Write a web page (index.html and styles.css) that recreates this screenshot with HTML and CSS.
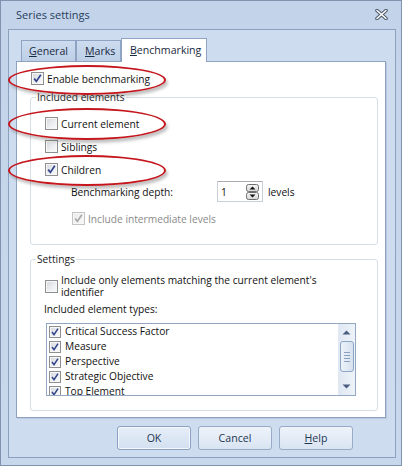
FILE: index.html
```html
<!DOCTYPE html>
<html>
<head>
<meta charset="utf-8">
<link rel="stylesheet" href="styles.css">
</head>
<body>
<div class="window">
  <div class="titlebar">
    <span class="title">Series settings</span>
    <svg class="close" width="13" height="11" viewBox="0 0 13 11">
      <path d="M2 1.5 L11 9.5 M11 1.5 L2 9.5" stroke="#4b5566" stroke-width="3.6" stroke-linecap="round"/>
      <path d="M2 1.5 L11 9.5 M11 1.5 L2 9.5" stroke="#ffffff" stroke-width="1.6" stroke-linecap="round"/>
    </svg>
  </div>
  <div class="frame">
    <div class="tabs">
      <div class="tab t-general"><u>G</u>eneral</div>
      <div class="tab t-marks"><u>M</u>arks</div>
      <div class="tab t-bench active"><u>B</u>enchmarking</div>
    </div>
    <div class="panel">
      <div class="check enable">
        <span class="cb"><svg width="11" height="11" viewBox="0 0 11 11"><path d="M2.2 5.6 L4.4 8.4 L8.8 1.8" fill="none" stroke="#31448a" stroke-width="1.7"/></svg></span>
        <span class="lbl">Enable benchmarking</span>
      </div>
      <div class="group g1">
        <div class="legend">Included elements</div>
        <div class="check row first">
          <span class="cb"></span><span class="lbl">Current element</span>
        </div>
        <div class="check row">
          <span class="cb"></span><span class="lbl">Siblings</span>
        </div>
        <div class="check row">
          <span class="cb"><svg width="11" height="11" viewBox="0 0 11 11"><path d="M2.2 5.6 L4.4 8.4 L8.8 1.8" fill="none" stroke="#31448a" stroke-width="1.7"/></svg></span>
          <span class="lbl">Children</span>
        </div>
        <div class="depth">
          <span class="depth-lbl">Benchmarking depth:</span>
          <div class="spin">
            <span class="spin-val">1</span>
            <svg class="spin-btn" width="13" height="16" viewBox="0 0 13 16">
              <defs>
                <linearGradient id="sg" x1="0" y1="0" x2="0" y2="1">
                  <stop offset="0" stop-color="#f6f6f6"/>
                  <stop offset="1" stop-color="#d6d6d6"/>
                </linearGradient>
              </defs>
              <rect x="0.5" y="0.5" width="12" height="7" rx="2" fill="url(#sg)" stroke="#6e6e6e"/>
              <rect x="0.5" y="8.5" width="12" height="7" rx="2" fill="url(#sg)" stroke="#6e6e6e"/>
              <path d="M3.5 5.5 L6.5 2.5 L9.5 5.5 Z" fill="#111"/>
              <path d="M3.5 10.5 L6.5 13.5 L9.5 10.5 Z" fill="#111"/>
            </svg>
          </div>
          <span class="levels">levels</span>
        </div>
        <div class="check disabled inter">
          <span class="cb"><svg width="11" height="11" viewBox="0 0 11 11"><path d="M2.2 5.6 L4.4 8.4 L8.8 1.8" fill="none" stroke="#a9a9a9" stroke-width="1.7"/></svg></span>
          <span class="lbl">Include intermediate levels</span>
        </div>
      </div>
      <div class="group g2">
        <div class="legend">Settings</div>
        <div class="check only">
          <span class="cb"></span>
          <span class="lbl two">Include only elements matching the current element's<br>identifier</span>
        </div>
        <div class="types">Included element types:</div>
        <div class="list">
          <div class="items">
            <div class="item"><span class="cb small"><svg width="10" height="10" viewBox="0 0 11 11"><path d="M2.2 5.6 L4.4 8.4 L8.8 1.8" fill="none" stroke="#31448a" stroke-width="1.7"/></svg></span><span>Critical Success Factor</span></div>
            <div class="item"><span class="cb small"><svg width="10" height="10" viewBox="0 0 11 11"><path d="M2.2 5.6 L4.4 8.4 L8.8 1.8" fill="none" stroke="#31448a" stroke-width="1.7"/></svg></span><span>Measure</span></div>
            <div class="item"><span class="cb small"><svg width="10" height="10" viewBox="0 0 11 11"><path d="M2.2 5.6 L4.4 8.4 L8.8 1.8" fill="none" stroke="#31448a" stroke-width="1.7"/></svg></span><span>Perspective</span></div>
            <div class="item"><span class="cb small"><svg width="10" height="10" viewBox="0 0 11 11"><path d="M2.2 5.6 L4.4 8.4 L8.8 1.8" fill="none" stroke="#31448a" stroke-width="1.7"/></svg></span><span>Strategic Objective</span></div>
            <div class="item"><span class="cb small"><svg width="10" height="10" viewBox="0 0 11 11"><path d="M2.2 5.6 L4.4 8.4 L8.8 1.8" fill="none" stroke="#31448a" stroke-width="1.7"/></svg></span><span>Top Element</span></div>
          </div>
          <div class="scrollbar">
            <div class="sb-btn"><svg width="9" height="5" viewBox="0 0 9 5"><path d="M0.5 4.5 L4.5 0.5 L8.5 4.5 Z" fill="#4a5d80"/></svg></div>
            <div class="sb-thumb">
              <span class="grip"></span><span class="grip"></span><span class="grip"></span><span class="grip"></span>
            </div>
            <div class="sb-track"></div>
            <div class="sb-btn"><svg width="9" height="5" viewBox="0 0 9 5"><path d="M0.5 0.5 L4.5 4.5 L8.5 0.5 Z" fill="#4a5d80"/></svg></div>
          </div>
        </div>
      </div>
    </div>
    <div class="buttons">
      <div class="btn default">OK</div>
      <div class="btn">Cancel</div>
      <div class="btn"><u>H</u>elp</div>
    </div>
  </div>
  <div class="ellipse e1"></div>
  <div class="ellipse e2"></div>
  <div class="ellipse e3"></div>
</div>
</body>
</html>
```

FILE: styles.css
```css
html, body {
  margin: 0;
  padding: 0;
}
body {
  font-family: "Open Sans", "Noto Sans", sans-serif;
  font-size: 10.2px;
  color: #111;
  background: #c4d5ea;
}
u {
  text-decoration: underline;
  text-underline-offset: 1px;
}
.window {
  position: relative;
  width: 402px;
  height: 466px;
  box-sizing: border-box;
  border: 1px solid #7f92ae;
  background: linear-gradient(#c3d4ea, #c8d8ec);
  display: flex;
  flex-direction: column;
  overflow: hidden;
}
.titlebar {
  height: 28px;
  display: flex;
  align-items: center;
  padding-left: 15px;
  flex-shrink: 0;
}
.title {
  font-size: 11px;
  color: #283d5c;
  margin-top: -2px;
}
.close {
  margin-left: auto;
  margin-right: 13px;
  margin-top: -2px;
}
.frame {
  margin: 0 5px 7px 7px;
  height: 429px;
  box-sizing: border-box;
  border: 1px solid #8ba1bf;
  background: #cedcef;
  padding-top: 8px;
  display: flex;
  flex-direction: column;
}
.tabs {
  margin-left: 12px;
  height: 23px;
  display: flex;
  align-items: flex-end;
}
.tab {
  height: 21px;
  box-sizing: border-box;
  border: 1px solid #8fa4c2;
  border-bottom: none;
  background: linear-gradient(#cddcef, #bdcfe7);
  padding-left: 7px;
  line-height: 20px;
  color: #1a2a40;
  font-size: 10.6px;
}
.t-general { width: 55px; }
.t-marks { width: 45px; padding-left: 8px; }
.t-bench { width: 86px; padding-left: 8px; }
.tab.active {
  height: 24px;
  margin-bottom: -1px;
  background: #fff;
  position: relative;
  z-index: 1;
  line-height: 23px;
  padding-bottom: 2px;
}
.panel {
  margin-left: 7px;
  width: 370px;
  height: 357px;
  box-sizing: border-box;
  border: 1px solid #8fa3c0;
  background: #fff;
  display: flex;
  flex-direction: column;
  box-shadow: 1px 1px 0 #b7c8df;
}
.check {
  display: flex;
  align-items: center;
  height: 13px;
}
.cb {
  width: 13px;
  height: 13px;
  box-sizing: border-box;
  flex-shrink: 0;
  border: 1px solid #8e8f8f;
  background: linear-gradient(135deg, #d3d6db 0%, #eef0f2 60%, #fafafa 100%);
  box-shadow: inset 0 0 0 1px #f7f7f7;
  display: flex;
  align-items: center;
  justify-content: center;
}
.cb.small {
  width: 12px;
  height: 12px;
}
.lbl {
  margin-left: 3px;
  line-height: 16px;
  white-space: nowrap;
}
.enable {
  margin: 10px 0 0 14px;
}
.group {
  margin-left: 13px;
  width: 348px;
  box-sizing: border-box;
  border: 1px solid #d5dee6;
  border-radius: 3px;
  display: flex;
  flex-direction: column;
}
.g1 {
  margin-top: 12px;
  height: 148px;
}
.g2 {
  margin-top: 14px;
  height: 152px;
}
.legend {
  align-self: flex-start;
  margin-top: -9px;
  margin-left: 5px;
  padding: 0 1px;
  line-height: 16px;
  background: #fff;
  color: #1b1b1b;
}
.row {
  margin-left: 14px;
  margin-top: 10px;
}
.row.first {
  margin-top: 12px;
}
.depth {
  margin: 5px 0 0 40px;
  height: 21px;
  display: flex;
  align-items: center;
}
.depth-lbl {
  width: 146px;
}
.spin {
  width: 46px;
  height: 21px;
  box-sizing: border-box;
  border: 1px solid #c9d0d8;
  border-top-color: #abadb3;
  display: flex;
  align-items: center;
}
.spin-val {
  margin-left: 3px;
}
.spin-btn {
  margin-left: auto;
  margin-right: 3px;
}
.levels {
  margin-left: 5px;
}
.inter {
  margin: 10px 0 0 41px;
}
.disabled .cb {
  border-color: #c2c4c6;
  background: linear-gradient(135deg, #ececec, #f8f8f8);
}
.disabled .lbl {
  color: #8a8a8a;
}
.only {
  margin: 6px 0 0 14px;
  height: 26px;
}
.lbl.two {
  line-height: 12.5px;
}
.types {
  margin: 2px 0 0 13px;
  line-height: 16px;
}
.list {
  margin: 6px 0 0 15px;
  width: 310px;
  height: 73px;
  box-sizing: border-box;
  border: 1px solid #94a7c1;
  display: flex;
  overflow: hidden;
}
.items {
  flex: 1;
  overflow: hidden;
}
.item {
  height: 15px;
  display: flex;
  align-items: center;
  padding-left: 2px;
}
.item span:last-child {
  margin-left: 4px;
  line-height: 15px;
  white-space: nowrap;
}
.scrollbar {
  width: 17px;
  background: linear-gradient(to right, #dfe7f2, #eef3f9);
  display: flex;
  flex-direction: column;
  align-items: center;
}
.sb-btn {
  height: 17px;
  width: 17px;
  display: flex;
  align-items: center;
  justify-content: center;
}
.sb-thumb {
  width: 14px;
  height: 31px;
  box-sizing: border-box;
  border: 1px solid #8ea6c6;
  border-radius: 3px;
  background: linear-gradient(to right, #edf2f9, #d5e1ef);
  display: flex;
  flex-direction: column;
  align-items: center;
  justify-content: center;
  gap: 2px;
}
.grip {
  width: 6px;
  height: 1px;
  background: #8aa0bf;
}
.sb-track {
  flex: 1;
}
.buttons {
  margin: 8px 0 0 108px;
  display: flex;
  gap: 7px;
}
.btn {
  width: 74px;
  height: 24px;
  box-sizing: border-box;
  border: 1px solid #98abc6;
  border-radius: 3px;
  background: linear-gradient(#eef3fa, #d9e4f2);
  display: flex;
  align-items: center;
  justify-content: center;
  color: #1d3552;
  font-size: 10.6px;
}
.btn.default {
  border-color: #8ba2c2;
  background: linear-gradient(#e6eef8, #d3e0f0);
  box-shadow: inset 0 0 0 1px #f4f8fd;
}
.ellipse {
  position: absolute;
  border: 2px solid #c4161c;
  border-radius: 50%;
  box-sizing: border-box;
  box-shadow: 2px 3px 3px rgba(80, 80, 80, 0.35);
}
.e1 {
  left: 7px;
  top: 64px;
  width: 158px;
  height: 30px;
}
.e2 {
  left: 7px;
  top: 107px;
  width: 158px;
  height: 32px;
}
.e3 {
  left: 7px;
  top: 154px;
  width: 158px;
  height: 31px;
}
```
